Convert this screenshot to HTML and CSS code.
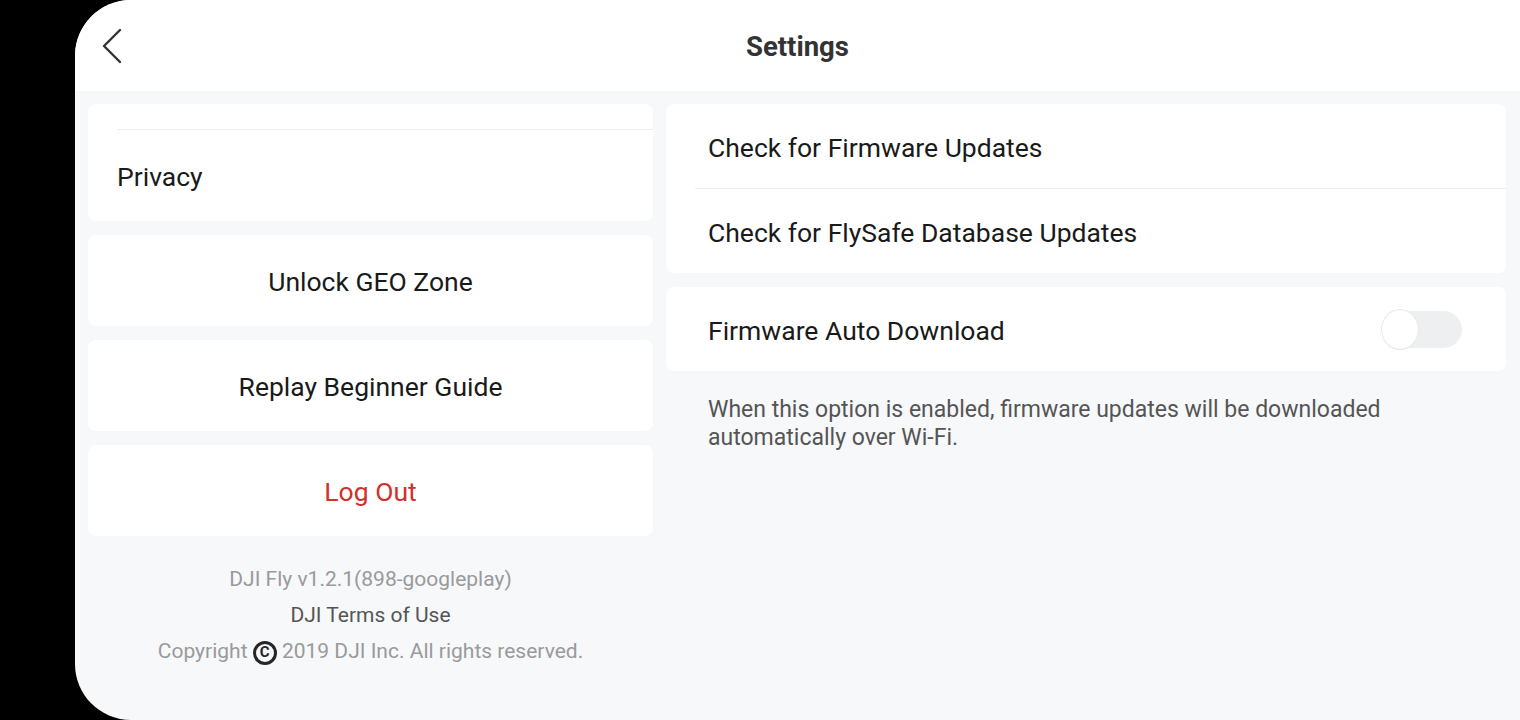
FILE: index.html
```html
<!DOCTYPE html>
<html>
<head>
<meta charset="utf-8">
<link rel="stylesheet" href="styles.css">
</head>
<body>
<div class="screen">
  <header class="topbar">
    <button class="back" aria-label="Back">
      <svg width="22" height="36" viewBox="0 0 22 36"><path d="M19 2 L3 18 L19 34" fill="none" stroke="#333" stroke-width="2.4" stroke-linecap="round" stroke-linejoin="round"/></svg>
    </button>
    <h1 class="title">Settings</h1>
  </header>
  <main class="content">
    <section class="left">
      <div class="card card-first">
        <div class="strip"></div>
        <div class="row row-left">Privacy</div>
      </div>
      <div class="card row row-center">Unlock GEO Zone</div>
      <div class="card row row-center">Replay Beginner Guide</div>
      <div class="card row row-center logout">Log Out</div>
      <div class="footer">
        <div class="muted">DJI Fly v1.2.1(898-googleplay)</div>
        <div class="terms">DJI Terms of Use</div>
        <div class="muted">Copyright <span class="copy">C</span> 2019 DJI Inc. All rights reserved.</div>
      </div>
    </section>
    <section class="right">
      <div class="card">
        <div class="rrow">Check for Firmware Updates</div>
        <div class="rdivider"></div>
        <div class="rrow">Check for FlySafe Database Updates</div>
      </div>
      <div class="card rrow toggle-row">
        <span>Firmware Auto Download</span>
        <span class="switch"><span class="knob"></span></span>
      </div>
      <p class="desc">When this option is enabled, firmware updates will be downloaded automatically over Wi-Fi.</p>
    </section>
  </main>
</div>
</body>
</html>
```
FILE: styles.css
```css
html, body {
  margin: 0;
  padding: 0;
  background: #000;
  width: 1520px;
  height: 720px;
  overflow: hidden;
}
body {
  font-family: Roboto, "Liberation Sans", sans-serif;
}
.screen {
  margin-left: 75px;
  width: 1445px;
  height: 720px;
  background: #f7f8fa;
  border-radius: 56px 0 0 56px;
  overflow: hidden;
  display: flex;
  flex-direction: column;
}
.topbar {
  height: 91px;
  background: #fff;
  position: relative;
  display: flex;
  align-items: center;
  justify-content: center;
  flex-shrink: 0;
}
.back {
  position: absolute;
  left: 26px;
  top: 28px;
  border: 0;
  background: none;
  padding: 0;
  width: 22px;
  height: 36px;
}
.title {
  margin: 0;
  padding-top: 2px;
  font-size: 27.5px;
  font-weight: 700;
  color: #333;
}
.content {
  display: flex;
  gap: 13px;
  padding: 13px 14px 0 13px;
}
.left {
  width: 565px;
  display: flex;
  flex-direction: column;
  gap: 14px;
}
.right {
  flex: 1;
  display: flex;
  flex-direction: column;
  gap: 14px;
}
.card {
  background: #fff;
  border-radius: 8px;
}
.strip {
  height: 25px;
  margin-left: 29px;
  border-bottom: 1px solid #eeeff1;
}
.row {
  height: 91px;
  display: flex;
  align-items: center;
  padding-top: 2px;
  box-sizing: border-box;
  font-size: 26.5px;
  color: #1a1a1a;
}
.row-left {
  padding-left: 29px;
}
.row-center {
  justify-content: center;
}
.logout {
  color: #d3302a;
}
.footer {
  text-align: center;
  font-size: 21px;
  line-height: 36px;
  margin-top: 11px;
}
.muted {
  color: #9a9a9a;
}
.terms {
  color: #555;
}
.copy {
  display: inline-flex;
  align-items: center;
  justify-content: center;
  box-sizing: border-box;
  width: 24px;
  height: 24px;
  border: 3px solid #262626;
  border-radius: 50%;
  color: #262626;
  font-weight: 700;
  font-size: 15px;
  line-height: 1;
  vertical-align: 1px;
}
.rrow {
  height: 84px;
  display: flex;
  align-items: center;
  padding-left: 42px;
  padding-top: 3px;
  box-sizing: border-box;
  font-size: 26.5px;
  color: #1a1a1a;
}
.rdivider {
  height: 1px;
  background: #eeeff1;
  margin-left: 29px;
}
.toggle-row {
  justify-content: space-between;
  padding-right: 44px;
  padding-top: 0;
}
.toggle-row span:first-child {
  padding-top: 3px;
}
.switch {
  width: 80px;
  height: 37px;
  border-radius: 19px;
  background: #eeeff1;
  display: flex;
  align-items: center;
}
.knob {
  width: 36px;
  height: 36px;
  border-radius: 50%;
  background: #fff;
  box-shadow: 0 0 0 1px #e6e7ea;
}
.desc {
  margin: 11px 0 0 42px;
  font-size: 23px;
  line-height: 28px;
  color: #555;
  max-width: 700px;
}
```
